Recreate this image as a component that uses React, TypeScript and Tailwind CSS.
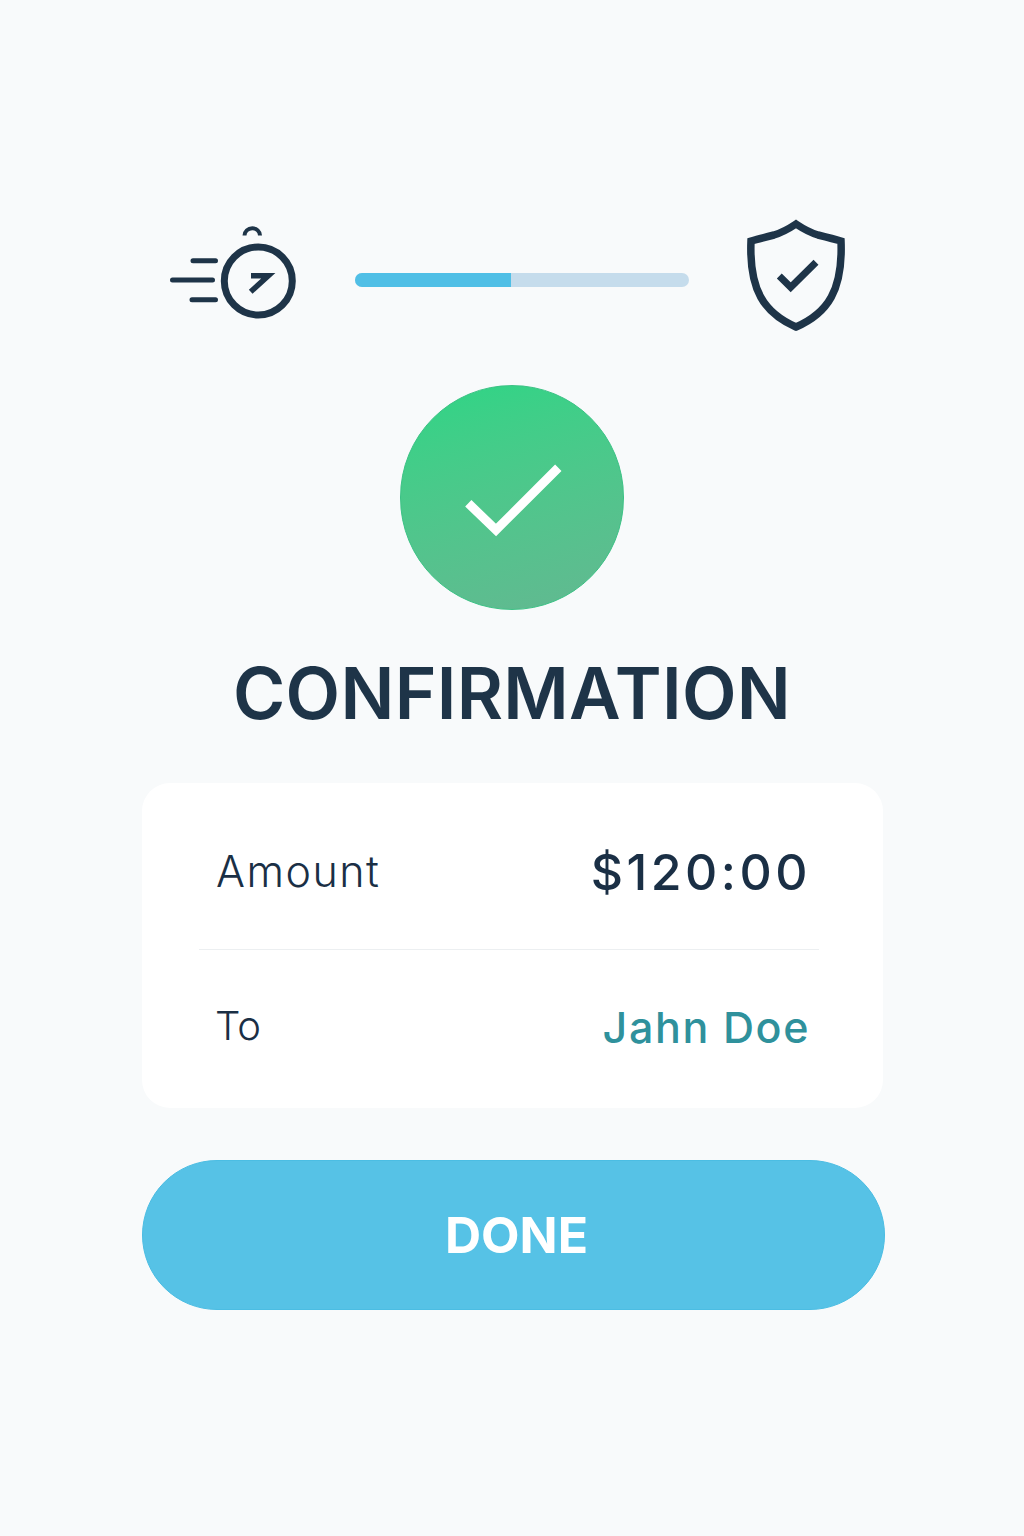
import React from 'react';

const SpeedTimer = () => (
  <svg width="126" height="95" viewBox="0 0 126 95" fill="none" stroke="#1e3448" strokeLinecap="round" className="mt-2 shrink-0">
    <circle cx="88.3" cy="55" r="34" strokeWidth="7" />
    <path d="M74.5 9.5 A7.5 7 0 0 1 90 9.5" strokeWidth="4" strokeLinecap="butt" />
    <path d="M23 34.7 H45.5 M2.5 54 H42.5 M22 73.7 H45.5" strokeWidth="5" />
    <path d="M81 49.7 H98.3 L80.7 65.7" strokeWidth="5.5" strokeLinecap="butt" />
  </svg>
);

const ShieldCheck = () => (
  <svg width="100" height="114" viewBox="0 0 100 114" fill="none" stroke="#1e3448" className="shrink-0">
    <path
      d="M50 6 C44 10 38 14 28 17 C20 19 12 21 5 23 C3 72 18 95 50 109 C82 95 97 72 95 23 C88 21 80 19 72 17 C62 14 56 10 50 6 Z"
      strokeWidth="7.5"
    />
    <path d="M33.3 58 L44.7 69.3 L70 44.3" strokeWidth="7" />
  </svg>
);

export default function App() {
  return (
    <div className="min-h-[1536px] bg-[#f8fafb] flex flex-col items-center pt-[218px]">
      <div className="w-[676px] flex items-start ml-[-8px]">
        <SpeedTimer />
        <div className="w-[334px] h-[14px] ml-[59px] mt-[55px] rounded-full bg-[#c5dcec] overflow-hidden">
          <div className="w-[156px] h-full bg-[#50bfe6]" />
        </div>
        <div className="ml-[57px]">
          <ShieldCheck />
        </div>
      </div>

      <div className="w-[224px] h-[225px] mt-[53px] rounded-full border border-[#3cc285] bg-linear-165 from-[#2cd585] to-[#62b891] flex items-center justify-center">
        <svg width="224" height="225" viewBox="0 0 224 225" fill="none" stroke="#ffffff" strokeWidth="9" className="shrink-0">
          <path d="M68.3 118.3 L96 145 L158.3 82.7" />
        </svg>
      </div>

      <h1 className="mt-[43px] text-[71px] leading-[80px] font-semibold tracking-[0.3px] text-[#1e3448] font-['Inter',sans-serif]">CONFIRMATION</h1>

      <div className="w-[741px] h-[325px] mt-[50px] ml-[1px] rounded-[28px] bg-white flex flex-col items-center">
        <div className="w-[620px] h-[167px] mr-[7px] border-b border-[#eceff1] flex items-center justify-between pl-[17px] pr-[8px] pt-[10px]">
          <span className="text-[43px] font-light tracking-[1.5px] text-[#1a2f45] font-['Inter',sans-serif]">Amount</span>
          <span className="text-[50px] font-medium tracking-[3.5px] mt-[3px] text-[#1a2f45] font-['Inter',sans-serif]">$120:00</span>
        </div>
        <div className="w-[620px] flex-1 mr-[7px] flex items-center justify-between pl-[16px] pr-[9px] pb-[6px]">
          <span className="text-[40px] font-light text-[#1a2f45] font-['Inter',sans-serif]">To</span>
          <span className="text-[43px] font-medium tracking-[1.6px] mt-[2px] text-[#2f919c] font-['Inter',sans-serif]">Jahn Doe</span>
        </div>
      </div>

      <button className="w-[743px] h-[150px] mt-[52px] ml-[3px] pl-[6px] rounded-[75px] border border-[#4bbde3] bg-[#56c2e6] text-white text-[50px] font-bold font-['Inter',sans-serif]">
        DONE
      </button>
    </div>
  );
}
